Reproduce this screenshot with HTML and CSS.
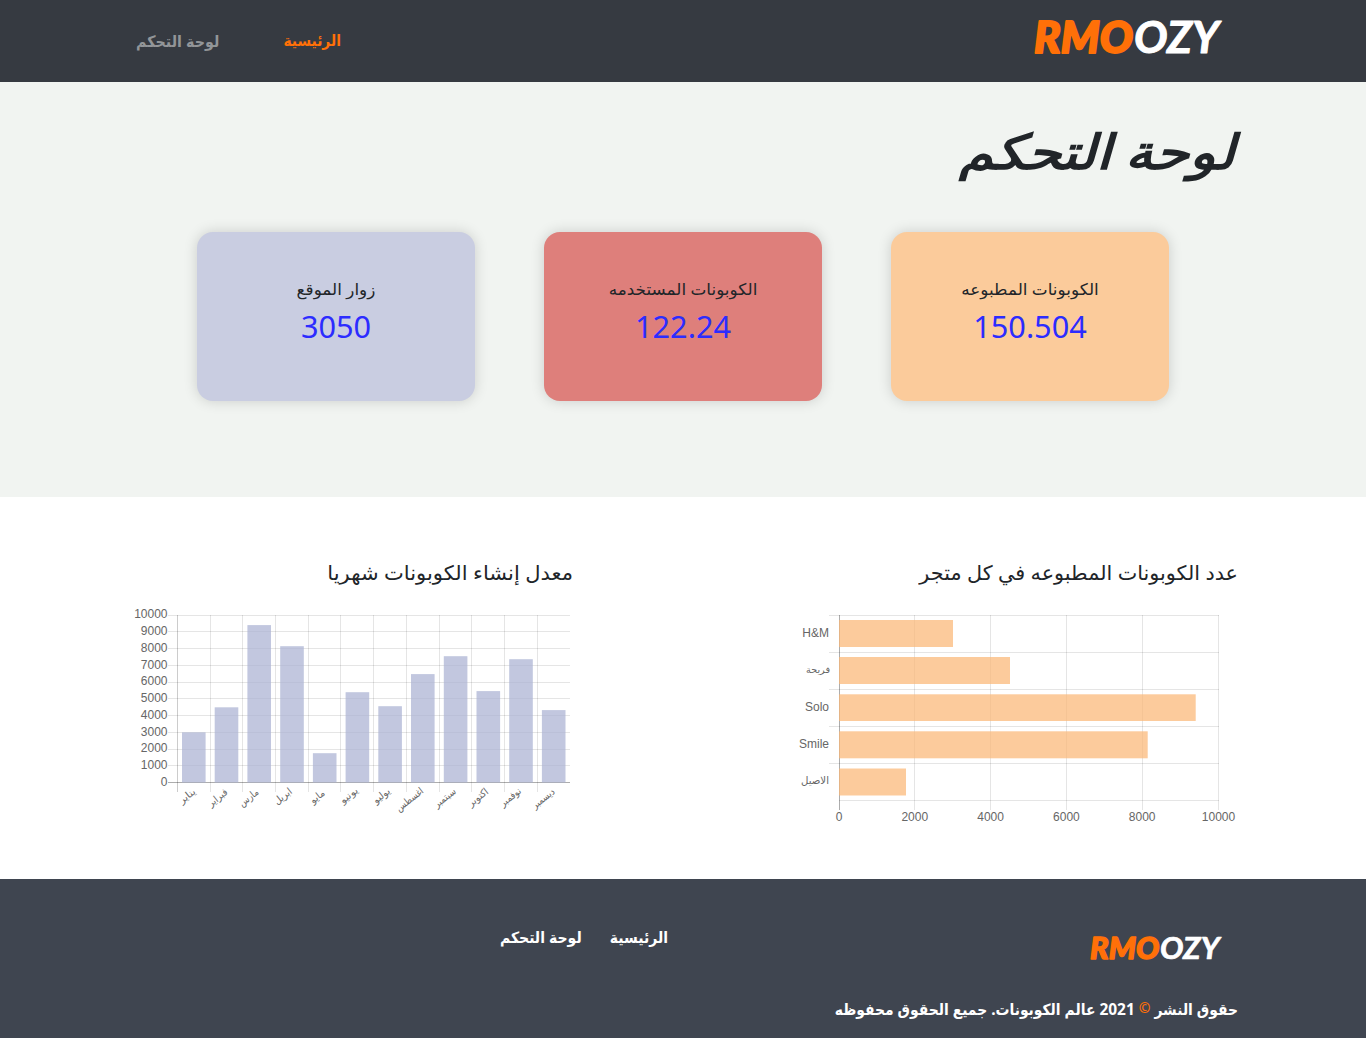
FILE: index.html
```html
<!DOCTYPE html>
<html lang="ar" dir="rtl">
<head>
<meta charset="utf-8">
<title>لوحة التحكم</title>
<link rel="stylesheet" href="styles.css">
</head>
<body>
<header class="navbar">
  <div class="container navbar-inner">
    <a class="brand"><svg width="200" height="68" viewBox="0 0 200 68" direction="ltr"><text class="logo-bold" x="3" y="48" textLength="99" lengthAdjust="spacingAndGlyphs">RMO</text><text class="logo-light" x="103" y="48" textLength="85" lengthAdjust="spacingAndGlyphs">OZY</text></svg></a>
    <nav class="nav-links"><a class="active">الرئيسية</a><a>لوحة التحكم</a></nav>
  </div>
</header>
<main>
  <section class="summary">
    <div class="container">
      <h1><span>لوحة التحكم</span></h1>
      <div class="cards">
        <article class="card orange"><h2>الكوبونات المطبوعه</h2><p>150.504</p></article>
        <article class="card red"><h2>الكوبونات المستخدمه</h2><p>122.24</p></article>
        <article class="card lavender"><h2>زوار الموقع</h2><p>3050</p></article>
      </div>
    </div>
  </section>
  <section class="container charts">
    <div class="chart">
      <h3 class="stores-title">عدد الكوبونات المطبوعه في كل متجر</h3>
      <svg class="plot" width="445" height="230" viewBox="793 600 445 230" direction="ltr">
        <path class="grid" d="M829 615.5H1219M829 652.5H1219M829 689.5H1219M829 726.5H1219M829 763.5H1219M839 800.5H1219M914.5 615V810M990.5 615V810M1066.5 615V810M1142.5 615V810M1218.5 615V810"/>
        <path class="axis" d="M839.5 615V810"/>
        <g class="bars-orange"><rect x="839" y="620" width="114" height="27"/><rect x="839" y="657" width="171" height="27"/><rect x="839" y="694.3" width="356.7" height="26.7"/><rect x="839" y="731.3" width="308.7" height="27"/><rect x="839" y="768.5" width="67" height="27"/></g>
        <g class="ticks end"><text x="829" y="637">H&amp;M</text><text class="ar" x="806" y="673" textLength="24" lengthAdjust="spacingAndGlyphs">فريحة</text><text x="829" y="711">Solo</text><text x="829" y="748">Smile</text><text class="ar" x="801" y="784" textLength="28" lengthAdjust="spacingAndGlyphs">الاصيل</text></g>
        <g class="ticks middle"><text x="839" y="821">0</text><text x="914.8" y="821">2000</text><text x="990.6" y="821">4000</text><text x="1066.4" y="821">6000</text><text x="1142.2" y="821">8000</text><text x="1218.5" y="821">10000</text></g>
      </svg>
    </div>
    <div class="chart">
      <h3 class="months-title">معدل إنشاء الكوبونات شهريا</h3>
      <svg class="plot" width="445" height="230" viewBox="128 600 445 230" direction="ltr">
        <path class="grid" d="M168 615.5H570M168 631.5H570M168 648.5H570M168 665.5H570M168 682.5H570M168 698.5H570M168 715.5H570M168 732.5H570M168 749.5H570M168 765.5H570M210.5 615V792M242.5 615V792M275.5 615V792M308.5 615V792M340.5 615V792M373.5 615V792M406.5 615V792M439.5 615V792M471.5 615V792M504.5 615V792M537.5 615V792"/>
        <path class="axis-light" d="M177.5 615V792"/>
        <path class="axis" d="M168 782.5H570"/>
        <g class="bars-lavender"><rect x="182" y="732.3" width="23.6" height="50.2"/><rect x="214.7" y="707.3" width="23.6" height="75.2"/><rect x="247.4" y="625.1" width="23.6" height="157.4"/><rect x="280.2" y="646.2" width="23.6" height="136.3"/><rect x="312.9" y="753.2" width="23.6" height="29.3"/><rect x="345.6" y="692.2" width="23.6" height="90.3"/><rect x="378.3" y="706.2" width="23.6" height="76.3"/><rect x="411" y="674.1" width="23.6" height="108.4"/><rect x="443.8" y="656.2" width="23.6" height="126.3"/><rect x="476.5" y="691.1" width="23.6" height="91.4"/><rect x="509.2" y="659.2" width="23.6" height="123.3"/><rect x="541.9" y="710.1" width="23.6" height="72.4"/></g>
        <g class="ticks end"><text x="167.5" y="618">10000</text><text x="167.5" y="635">9000</text><text x="167.5" y="652">8000</text><text x="167.5" y="669">7000</text><text x="167.5" y="685">6000</text><text x="167.5" y="702">5000</text><text x="167.5" y="719">4000</text><text x="167.5" y="736">3000</text><text x="167.5" y="752">2000</text><text x="167.5" y="769">1000</text><text x="167.5" y="786">0</text></g>
        <g class="ticks ar">
          <text transform="translate(182 804) rotate(-38)" textLength="18" lengthAdjust="spacingAndGlyphs">يناير</text>
          <text transform="translate(211 807) rotate(-38)" textLength="22" lengthAdjust="spacingAndGlyphs">فبراير</text>
          <text transform="translate(242 807) rotate(-38)" textLength="22" lengthAdjust="spacingAndGlyphs">مارس</text>
          <text transform="translate(277 805) rotate(-38)" textLength="20" lengthAdjust="spacingAndGlyphs">ابريل</text>
          <text transform="translate(313 804) rotate(-38)" textLength="16" lengthAdjust="spacingAndGlyphs">مايو</text>
          <text transform="translate(343 804) rotate(-38)" textLength="20" lengthAdjust="spacingAndGlyphs">يونيو</text>
          <text transform="translate(376 804) rotate(-38)" textLength="19" lengthAdjust="spacingAndGlyphs">يوليو</text>
          <text transform="translate(399 812) rotate(-38)" textLength="32" lengthAdjust="spacingAndGlyphs">اغسطس</text>
          <text transform="translate(437 808) rotate(-38)" textLength="25" lengthAdjust="spacingAndGlyphs">سبتمبر</text>
          <text transform="translate(471 807) rotate(-38)" textLength="23" lengthAdjust="spacingAndGlyphs">اكتوبر</text>
          <text transform="translate(503 807) rotate(-38)" textLength="24" lengthAdjust="spacingAndGlyphs">نوفمبر</text>
          <text transform="translate(535 809) rotate(-38)" textLength="26" lengthAdjust="spacingAndGlyphs">ديسمبر</text>
        </g>
      </svg>
    </div>
  </section>
</main>
<footer>
  <div class="container footer-grid">
    <div class="footer-about">
      <a class="brand"><svg width="140" height="48" viewBox="0 0 200 68" direction="ltr"><text class="logo-bold" x="3" y="48" textLength="99" lengthAdjust="spacingAndGlyphs">RMO</text><text class="logo-light" x="103" y="48" textLength="85" lengthAdjust="spacingAndGlyphs">OZY</text></svg></a>
      <p>حقوق النشر <span class="copyright">©</span> 2021 عالم الكوبونات. جميع الحقوق محفوظه</p>
    </div>
    <nav class="footer-links"><a>الرئيسية</a><a>لوحة التحكم</a></nav>
  </div>
</footer>
</body>
</html>
```
FILE: styles.css
```css
* { box-sizing: border-box; }
body { margin: 0; background: #fff; color: #212529; font-family: "Noto Sans", "DejaVu Sans", sans-serif; }
h1, h2, h3, p { margin: 0; font-weight: 400; white-space: nowrap; }
a { white-space: nowrap; }
svg { display: block; }
.container { width: 1140px; margin: 0 auto; padding: 0 15px; }
.navbar { height: 82px; background: #363a41; }
.navbar-inner { height: 82px; display: flex; justify-content: space-between; padding-top: 5px; }
.brand { display: block; margin-right: 7px; }
.logo-bold, .logo-light { font-family: Lato, sans-serif; font-size: 43px; font-style: italic; font-weight: 900; fill: #ff7008; stroke: #ff7008; stroke-width: 2; stroke-linejoin: round; }
.logo-light { font-weight: 700; fill: #fff; stroke: #fff; stroke-width: 1; }
.nav-links, footer { font-family: "Noto Sans", "DejaVu Sans Condensed", "DejaVu Sans", sans-serif; }
.nav-links { display: flex; gap: 64px; margin-left: 8px; padding-top: 24px; font-size: 15.9px; line-height: 24px; font-weight: 700; color: #929598; }
.nav-links .active { color: #ff7008; font-size: 15.4px; }
.summary { height: 415px; background: #f1f4f1; padding-top: 33px; }
h1 { font-size: 48px; line-height: 72px; font-style: italic; font-weight: 600; }
h1 span { display: inline-block; margin-right: 3px; transform: scaleX(1.15); transform-origin: right center; }
.cards { display: flex; gap: 69px; justify-content: center; padding-top: 45px; }
.card { width: 278px; height: 169px; padding-top: 44px; border-radius: 16px; text-align: center; box-shadow: 0 0 14px rgba(0,0,0,.16); }
.orange { background: #fbcb9b; }
.red { background: #de7f7b; }
.lavender { background: #c9cde1; }
.card h2 { font-size: 16px; line-height: 26px; transform: scaleX(1.053); }
.card p { font-size: 30.7px; line-height: 48px; color: #2c2cff; }
.charts { height: 382px; display: flex; justify-content: space-between; padding-top: 60px; }
.chart { width: 445px; }
.chart h3 { font-size: 20px; line-height: 32px; height: 43px; transform: scaleX(1.038); transform-origin: right center; }
.chart .months-title { transform: scaleX(1.052); }
.grid { stroke: rgba(0,0,0,.1); fill: none; }
.axis { stroke: rgba(0,0,0,.32); fill: none; }
.axis-light { stroke: rgba(0,0,0,.2); fill: none; }
.bars-orange { fill: rgba(251,183,118,.72); }
.bars-lavender { fill: rgba(171,177,210,.72); }
.ticks { font-family: "Liberation Sans", sans-serif; font-size: 12px; fill: #666; }
.end { text-anchor: end; }
.middle { text-anchor: middle; }
.ar { font-family: "DejaVu Sans", sans-serif; font-size: 10px; text-anchor: start; }
footer { height: 159px; background: #3f4550; color: #fff; font-weight: 700; font-size: 16px; }
.footer-grid { display: flex; padding-top: 46px; }
.footer-about { width: 570px; }
.footer-about .brand { margin-right: 10px; }
.footer-about p { margin-top: 24px; line-height: 24px; font-weight: 700; font-size: 15.45px; }
.copyright { color: #ff7008; font-size: 14px; vertical-align: 2px; line-height: 1; }
.footer-links { display: flex; gap: 28px; line-height: 24px; font-size: 15.6px; }
```
